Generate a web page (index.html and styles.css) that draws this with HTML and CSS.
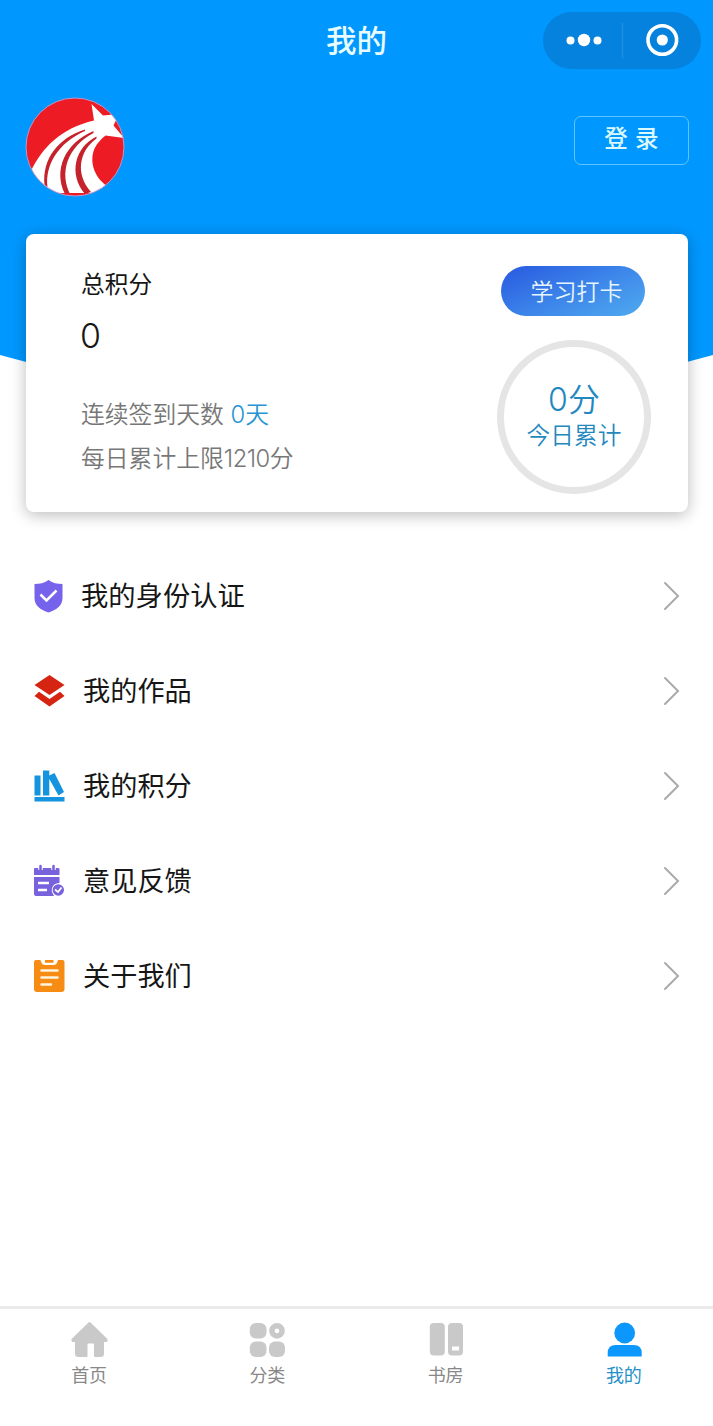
FILE: index.html
```html
<!DOCTYPE html>
<html lang="zh-CN">
<head>
<meta charset="utf-8">
<title>我的</title>
<link rel="stylesheet" href="styles.css">
</head>
<body>
<div class="page">
  <header class="hero">
    <div class="navbar">
      <h1 class="title">我的</h1>
      <div class="capsule">
        <svg width="158" height="57" viewBox="0 0 158 57" fill="#fff">
          <circle cx="27.500" cy="28.500" r="4"/><circle cx="41" cy="28" r="6.200"/><circle cx="54.500" cy="28.500" r="4"/>
          <path d="M79.500 11V46" stroke="#1c8fe2" stroke-width="1.500"/>
          <circle cx="119.300" cy="28" r="14.300" fill="none" stroke="#fff" stroke-width="3.600"/><circle cx="119.300" cy="28" r="5.600"/>
        </svg>
      </div>
    </div>
    <div class="profile">
      <svg class="avatar" width="100" height="100" viewBox="0 0 100 100">
        <defs><clipPath id="disc"><circle cx="50" cy="50" r="49"/></clipPath></defs>
        <g clip-path="url(#disc)">
          <rect width="100" height="100" fill="#ed1c24"/>
          <path fill="#fff" d="M66.500 7 78 18.500 94 17 88.500 28.500 99 41 80.500 38.500C70 47 66.500 55 67.500 66C69 77 75 84 83 90L60 102H25L6 74C17 51 36 31 69 23.500Z"/>
          <g fill="#c5222b">
            <path d="M60 32.500C33 41 17 62 19.500 88L22.500 90C20 68 33 46 60 34Z"/>
            <path d="M68.500 34C40 46 28 73 40 97L45.500 98C34 76 42 50 68.500 36Z"/>
            <path d="M71.500 39.500C50 50 43 77 60 97L66 95C50 77 54 54 71.500 41.500Z"/>
          </g>
          <path d="M32 97.500H66" stroke="#ed1c24" stroke-width="3"/>
        </g>
        <circle cx="50" cy="50" r="49" fill="none" stroke="#b39bd2" stroke-width="1"/>
      </svg>
      <button class="login">登 录</button>
    </div>
  </header>

  <section class="card">
    <div class="points">
      <div class="points-label">总积分</div>
      <div class="points-value">0</div>
      <div class="note">连续签到天数 <span class="accent">0天</span></div>
      <div class="note">每日累计上限<span class="num">1210</span>分</div>
    </div>
    <div class="today">
      <button class="checkin">学习打卡</button>
      <div class="ring">
        <div class="ring-value">0分</div>
        <div class="ring-label">今日累计</div>
      </div>
    </div>
  </section>

  <nav class="menu">
    <a class="row"><svg class="icon" viewBox="0 0 32 34"><path fill="#7563ec" d="M15.500 1C20 4 24 5 29.500 5V19C29.500 27 23 31 15.500 33.500C8 31 1.500 27 1.500 19V5C7 5 11 4 15.500 1Z"/><path d="M7.500 15.500 13.500 21.500 23.500 11.500" fill="none" stroke="#fff" stroke-width="2.500"/></svg><span class="name first">我的身份认证</span><svg class="arrow" viewBox="0 0 18 30"><path d="M2 2 15 15 2 28"/></svg></a>
    <a class="row"><svg class="icon" viewBox="0 0 32 34"><path fill="#d52412" d="M16.500 1 31.500 11 16.500 21 1.500 11ZM6 17.800 16.500 25 27 17.800 31.500 22 16.500 32.500 1.500 22Z"/></svg><span class="name">我的作品</span><svg class="arrow" viewBox="0 0 18 30"><path d="M2 2 15 15 2 28"/></svg></a>
    <a class="row"><svg class="icon" viewBox="0 0 32 34"><path fill="#1494de" d="M1.500 6.500H7.500V26.500H1.500ZM10 1.500H16.300V26.500H10ZM16.300 6.500 21.500 4 31 23 25.500 26.500 16.300 10ZM1.500 28H31.500V32.500H1.500Z"/></svg><span class="name">我的积分</span><svg class="arrow" viewBox="0 0 18 30"><path d="M2 2 15 15 2 28"/></svg></a>
    <a class="row"><svg class="icon" viewBox="0 0 32 34"><path fill="#7863dd" d="M1 5Q1 4 2 4H25Q26.500 4 26.500 5V11H1ZM1 13H26.500V19C21 19 18 23 19 28L21 32H3Q1 32 1 30Z"/><path d="M7.500 1V6M20.500 1V6" stroke="#fff" stroke-width="4.500"/><path d="M7.500 2V6M20.500 2V6" stroke="#7863dd" stroke-width="2.500" stroke-linecap="round"/><path d="M5 19H16M5 26H14" stroke="#fff" stroke-width="2.500"/><circle cx="25.300" cy="26" r="5.700" fill="#7863dd"/><path d="M22 25.500 25 28 28.500 23.500" stroke="#fff" stroke-width="1.700" fill="none"/></svg><span class="name">意见反馈</span><svg class="arrow" viewBox="0 0 18 30"><path d="M2 2 15 15 2 28"/></svg></a>
    <a class="row"><svg class="icon" viewBox="0 0 32 34"><path fill="#f68c13" d="M3 1H7.500Q8.500 6 12 6H20.500Q24 6 25 1H29.500Q31.500 1 31.500 3V30Q31.500 33 28.500 33H4Q1 33 1 30V3Q1 1 3 1ZM12 1H20.500V3.700H12Z"/><path d="M8.500 11.500H24.500M8.500 18.500H24.500M8.500 25.500H18" stroke="#fff3df" stroke-width="2.500" stroke-linecap="round"/></svg><span class="name">关于我们</span><svg class="arrow" viewBox="0 0 18 30"><path d="M2 2 15 15 2 28"/></svg></a>
  </nav>

  <footer class="tabbar">
    <a class="tab"><svg width="40" height="40" viewBox="0 0 40 40"><path fill="#c9c9c9" stroke="#c9c9c9" stroke-width="2" stroke-linejoin="round" d="M20.500 3 37.500 19.500V21H34V34Q34 36 31.500 36H26V24Q26 22.500 24.500 22.500H19Q17.500 22.500 17.500 24V36H9.500Q7 36 7 34V21H3.500V19.500Z"/></svg><span>首页</span></a>
    <a class="tab"><svg width="40" height="40" viewBox="0 0 40 40" fill="#c9c9c9"><rect x="2.800" y="3" width="16.700" height="15.500" rx="6"/><rect x="2.800" y="21.500" width="16.700" height="15.500" rx="6"/><rect x="22" y="21.500" width="16" height="15.500" rx="6"/><circle cx="30" cy="10.800" r="5.100" fill="none" stroke="#c9c9c9" stroke-width="5.500"/></svg><span>分类</span></a>
    <a class="tab"><svg width="40" height="40" viewBox="0 0 40 40" fill="#c9c9c9"><rect x="3.800" y="3" width="15" height="32.500" rx="4"/><rect x="22" y="3" width="15" height="32.500" rx="4"/><rect x="26" y="26.500" width="7" height="4" fill="#fff"/></svg><span>书房</span></a>
    <a class="tab active"><svg width="40" height="40" viewBox="0 0 40 40" fill="#0b97fc"><circle cx="20.700" cy="13" r="10.400"/><path d="M3.700 36.500V33Q3.700 25 11.700 25H29.700Q37.700 25 37.700 33V36.500Z"/></svg><span>我的</span></a>
  </footer>
</div>
</body>
</html>
```
FILE: styles.css
```css
* { box-sizing: border-box; }
body { margin: 0; background: #fff; font-family: Inter, "Noto Sans CJK SC", sans-serif; color: #161616; }
.page { display: flex; flex-direction: column; height: 1426px; overflow: hidden; }
svg { display: block; flex: none; }
button { font: inherit; padding: 0; }

.hero { height: 440px; flex: none; background: #0098ff; clip-path: polygon(0 0, 100% 0, 100% 355px, 50% 450px, 0 355px); }
.navbar { display: grid; grid-template-columns: 1fr auto 1fr; align-items: center; height: 80px; padding: 0 12px; }
.title { grid-column: 2; margin: 0; padding-top: 1px; font-size: 30.500px; line-height: 40px; font-weight: 500; color: #e8fbff; }
.capsule { justify-self: end; width: 158px; height: 57px; border-radius: 29px; background: #0582de; }
.profile { display: flex; justify-content: space-between; padding: 17px 24px 0 25px; }
.login { width: 115px; height: 49px; margin-top: 19px; padding-bottom: 3px; border: 1px solid #5fc4ff; border-radius: 7px; background: transparent; color: #dcf8ff; font-size: 23.500px; font-weight: 500; line-height: 1; word-spacing: 1px; }

.card { position: relative; z-index: 1; flex: none; display: flex; justify-content: space-between; height: 278px; margin: -206px 25px 0 26px; padding: 32px 37px 0 55px; border-radius: 8px; background: #fff; box-shadow: 0 3px 16px rgba(0, 0, 0, .27); }
.points-label { padding-top: 1px; font-size: 23.700px; line-height: 36px; }
.points-value { font-size: 34px; line-height: 40px; margin: 13px 0 37px -1px; font-weight: 350; }
.note { font-size: 23.800px; line-height: 44px; color: #777; white-space: nowrap; font-weight: 350; }
.num { letter-spacing: -.5px; }
.accent { color: #2794d3; }
.today { display: flex; flex-direction: column; align-items: center; }
.checkin { width: 144px; height: 50px; margin-right: 2px; padding: 0 0 2px 7px; border: 0; border-radius: 25px; background: linear-gradient(155deg, #2a5de0 5%, #3c84ea 50%, #4da7ee 95%); color: #e6f5ff; font-size: 23px; font-weight: 350; }
.ring { display: flex; flex-direction: column; align-items: center; width: 154px; height: 154px; margin-top: 24px; padding-top: 34px; border: 7px solid #e5e5e5; border-radius: 50%; color: #2488bf; }
.ring-value { font-size: 32px; line-height: 38px; font-weight: 350; }
.ring-label { font-size: 23.700px; line-height: 34px; font-weight: 350; }

.menu { display: flex; flex-direction: column; margin-top: 36px; }
.row { display: flex; align-items: center; height: 95px; padding: 0 32px 0 33px; }
.icon { width: 32px; height: 34px; }
.name { flex: 1; margin-left: 18px; padding-top: 2px; font-size: 27.200px; line-height: 40px; }
.name.first { margin-left: 16px; font-size: 27.300px; }
.arrow { width: 18px; height: 30px; fill: none; stroke: #aaa; stroke-width: 2; stroke-linecap: round; }

.tabbar { display: grid; grid-template-columns: repeat(4, 1fr); height: 120px; margin-top: auto; border-top: 3px solid #ebebeb; }
.tab { display: flex; flex-direction: column; align-items: center; padding-top: 11px; font-size: 18px; line-height: 28px; color: #888; }
.tab span { margin-top: 2px; }
.tab.active { color: #258fc9; }
```
